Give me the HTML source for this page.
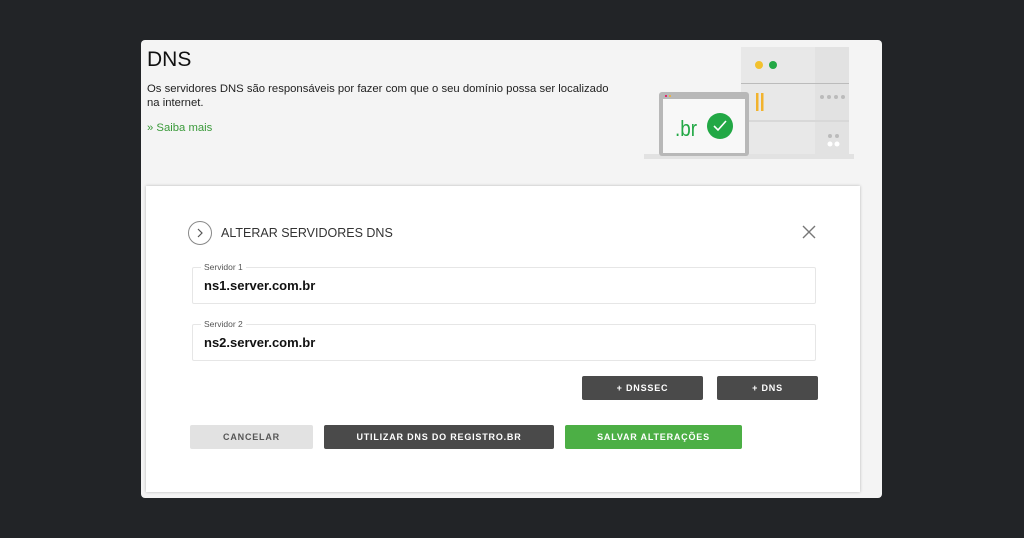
<!DOCTYPE html>
<html><head><meta charset="utf-8"><style>
*{margin:0;padding:0;box-sizing:border-box}
body{width:1024px;height:538px;background:#222427;position:relative;overflow:hidden;font-family:"Liberation Sans",sans-serif}
.card{position:absolute;left:141px;top:40px;width:741px;height:458px;background:#f4f4f4;border-radius:4px}
.abs{position:absolute}
h1{position:absolute;left:6px;top:8px;font-size:21px;font-weight:normal;color:#111}
.desc{left:6px;top:42px;font-size:11.3px;line-height:14px;color:#222;width:470px}
.saiba{left:6px;top:82px;font-size:11.3px;color:#3a9a3a}
.panel{position:absolute;left:146px;top:186px;width:714px;height:306px;background:#fff;box-shadow:0 0 3px rgba(0,0,0,.25)}
.field{position:absolute;border:1px solid #e6e6e6;border-radius:2px;left:192px;width:624px;height:37px}
.field .lab{position:absolute;left:8px;top:-6px;background:#fff;padding:0 3px;font-size:8.5px;color:#555}
.field .val{position:absolute;left:11px;top:10px;font-size:13px;font-weight:bold;color:#111}
.btn{position:absolute;height:24px;border-radius:2px;color:#fff;font-size:9px;font-weight:bold;letter-spacing:.8px;text-align:center;line-height:24px}
.dark{background:#4a4a4a}
</style></head><body>
<div class="card">
<h1>DNS</h1>
<div class="abs desc">Os servidores DNS são responsáveis por fazer com que o seu domínio possa ser localizado na internet.</div>
<div class="abs saiba">» Saiba mais</div>
<svg class="abs" style="left:500px;top:4px" width="225" height="118" viewBox="0 0 225 118">
<rect x="100" y="3" width="108" height="36" fill="#e8e8e8"/><rect x="174" y="3" width="34" height="36" fill="#e2e2e2"/>
<rect x="100" y="40" width="108" height="36" fill="#e8e8e8"/><rect x="174" y="40" width="34" height="36" fill="#e2e2e2"/>
<rect x="100" y="78" width="108" height="36" fill="#e8e8e8"/><rect x="174" y="78" width="34" height="36" fill="#e2e2e2"/>
<line x1="100" y1="39.5" x2="208" y2="39.5" stroke="#bbb"/><line x1="100" y1="77" x2="208" y2="77" stroke="#bbb"/>
<circle cx="118" cy="21" r="4" fill="#f2c12e"/><circle cx="132" cy="21" r="4" fill="#22a845"/>
<rect x="115" y="49" width="2.5" height="18" fill="#f2b32e"/><rect x="120" y="49" width="2.5" height="18" fill="#f2b32e"/>
<g fill="#bbb"><circle cx="181" cy="53" r="2"/><circle cx="188" cy="53" r="2"/><circle cx="195" cy="53" r="2"/><circle cx="202" cy="53" r="2"/><circle cx="189" cy="92" r="2"/><circle cx="196" cy="92" r="2"/></g>
<g fill="#fff"><circle cx="189" cy="100" r="2.5"/><circle cx="196" cy="100" r="2.5"/></g>
<rect x="3" y="110" width="210" height="5" fill="#e2e2e2"/>
<rect x="18" y="48" width="90" height="64" rx="3" fill="#b8b8b8"/>
<rect x="22" y="55" width="82" height="54" fill="#f8f8f8"/>
<circle cx="25" cy="52" r="1" fill="#e05"/><circle cx="29" cy="52" r="1" fill="#f2b32e"/>
<text x="34" y="92" font-family="Liberation Sans Narrow, Liberation Sans" font-size="22" fill="#22a845" textLength="22" lengthAdjust="spacingAndGlyphs">.br</text>
<circle cx="79" cy="82" r="13" fill="#22a845"/>
<path d="M73 82 L77 86 L85 77" stroke="#fff" stroke-width="1.6" fill="none"/>
</svg>
</div>
<div class="panel"></div>
<svg class="abs" style="left:187px;top:220px" width="26" height="26"><circle cx="13" cy="13" r="11.5" fill="none" stroke="#888"/><path d="M11 9 L15 13 L11 17" fill="none" stroke="#555" stroke-width="1.2"/></svg>
<div class="abs" style="left:221px;top:226px;font-size:12.5px;color:#333">ALTERAR SERVIDORES DNS</div>
<svg class="abs" style="left:801px;top:224px" width="16" height="16"><path d="M2 2L14 14M14 2L2 14" stroke="#777" stroke-width="1.4"/></svg>
<div class="field" style="top:267px"><span class="lab">Servidor 1</span><span class="val">ns1.server.com.br</span></div>
<div class="field" style="top:324px"><span class="lab">Servidor 2</span><span class="val">ns2.server.com.br</span></div>
<div class="btn dark" style="left:582px;top:376px;width:121px">+ DNSSEC</div>
<div class="btn dark" style="left:717px;top:376px;width:101px">+ DNS</div>
<div class="btn" style="left:190px;top:425px;width:123px;background:#e2e2e2;color:#555">CANCELAR</div>
<div class="btn dark" style="left:324px;top:425px;width:230px">UTILIZAR DNS DO REGISTRO.BR</div>
<div class="btn" style="left:565px;top:425px;width:177px;background:#4caf45">SALVAR ALTERAÇÕES</div>
</body></html>
